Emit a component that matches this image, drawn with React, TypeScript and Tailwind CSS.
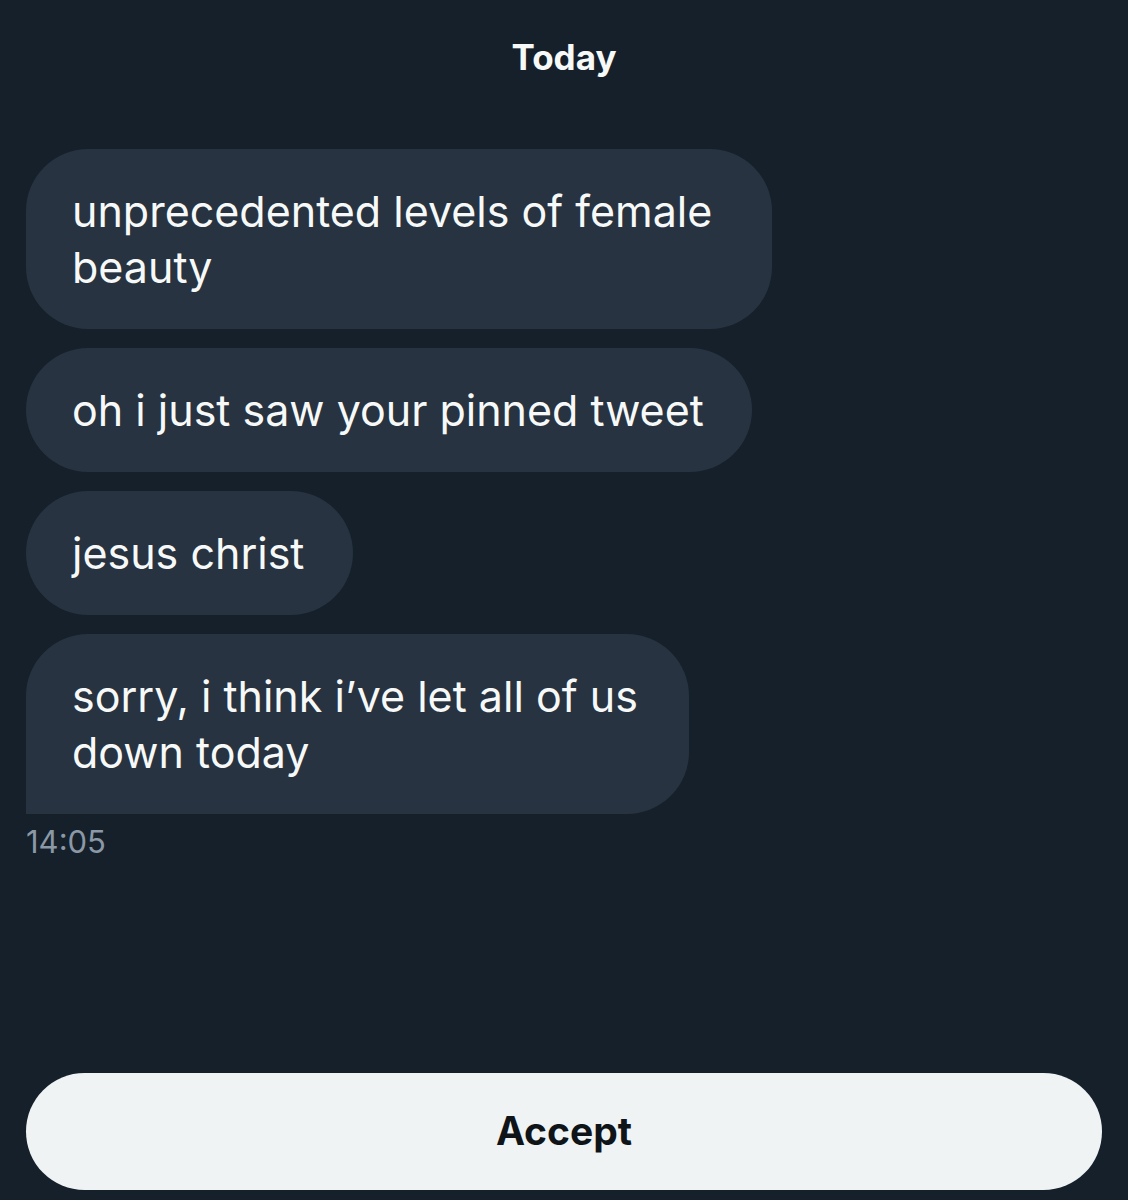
import React from 'react';

const messages: { lines: string[]; width: string; last?: boolean }[] = [
    { lines: ['unprecedented levels of female', 'beauty'], width: 'w-[746px]' },
    { lines: ['oh i just saw your pinned tweet'], width: 'w-[726px]' },
    { lines: ['jesus christ'], width: 'w-[327px]' },
    { lines: ['sorry, i think i’ve let all of us', 'down today'], width: 'w-[663px]', last: true },
];

const App: React.FC = () => {
    return (
        <div className="w-[1128px] h-[1200px] bg-[#15202b] flex flex-col font-['Inter',sans-serif] overflow-hidden">
            <div className="pt-[36px] text-center text-[35px] font-bold text-[#f7f9f9] leading-[42px]">Today</div>

            {/* message bubbles */}
            <div className="mt-[71px] px-[26px] flex flex-col gap-[19px]">
                {messages.map((m, i) => (
                    <div
                        key={i}
                        className={`${m.width} bg-[#273340] text-[#f7f9f9] text-[43px] leading-[56px] pl-[46px] py-[34px] whitespace-nowrap ${
                            m.last ? 'rounded-[62px] rounded-bl-none' : 'rounded-[62px]'
                        }`}
                    >
                        {m.lines.map((l, j) => (
                            <div key={j}>{l}</div>
                        ))}
                    </div>
                ))}
            </div>
            <div className="px-[26px] mt-[10px] text-[31px] text-[#8b98a5] leading-[36px]">14:05</div>

            <div className="mt-auto px-[26px] pb-[10px]">
                <button
                    type="button"
                    className="w-full h-[117px] rounded-full bg-[#eff3f4] text-[#0f1419] text-[39px] font-bold"
                >
                    Accept
                </button>
            </div>
        </div>
    );
};

export default App;
